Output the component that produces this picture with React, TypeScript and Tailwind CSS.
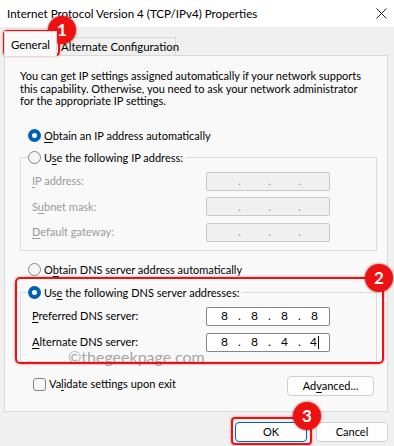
import type { ReactNode } from 'react';

const font = { fontFamily: 'Lato, "Noto Sans", sans-serif' };

function Radio({ checked = false }: { checked?: boolean }) {
  return checked ? (
    <span className="flex h-[13px] w-[13px] shrink-0 items-center justify-center rounded-full bg-[#005fb8]">
      <span className="h-[5px] w-[5px] rounded-full bg-white" />
    </span>
  ) : (
    <span className="h-[13px] w-[13px] shrink-0 rounded-full border border-[#858585] bg-[#f5f5f5]" />
  );
}

function Option({ checked, children }: { checked?: boolean; children: ReactNode }) {
  return (
    <div className="flex h-[16px] items-center gap-[3px] whitespace-nowrap bg-[#f9f9f9] pr-[3px]">
      <Radio checked={checked} />
      <span className="leading-[16px]">{children}</span>
    </div>
  );
}

function IpBox({ values, disabled }: { values: string[]; disabled?: boolean }) {
  return (
    <div
      className={
        disabled
          ? 'flex h-[19px] w-[124px] items-center rounded-[2px] border border-[#c9c9c9] bg-[#f0f0f0] pl-[4px] text-[#8a8a8a]'
          : 'flex h-[19px] w-[124px] items-center rounded-[2px] border border-[#868686] bg-white pl-[4px] text-[12px] text-black'
      }
    >
      {values.map((v, i) => (
        <div key={i} className="flex items-center">
          {i > 0 && <span className="w-[3px] text-center">.</span>}
          <span className="flex w-[27px] items-center justify-center">
            {v}
            {i === 3 && values[3] === '4' && <span className="ml-px h-[13px] w-px bg-black" />}
          </span>
        </div>
      ))}
    </div>
  );
}

function Field({ label, values, disabled }: { label: ReactNode; values: string[]; disabled?: boolean }) {
  return (
    <div className="flex h-[19px] items-center whitespace-nowrap">
      <span className={disabled ? 'w-[174px] text-[#9a9a9a]' : 'w-[174px]'}>{label}</span>
      <IpBox values={values} disabled={disabled} />
    </div>
  );
}

function Badge({ n, className }: { n: string; className: string }) {
  return (
    <div
      className={`absolute flex h-[28px] w-[28px] items-center justify-center rounded-full bg-[#ee1111] text-[17px] font-bold text-white shadow-[0_0_2px_1px_rgba(120,0,0,0.35)] ${className}`}
    >
      {n}
    </div>
  );
}

export default function App() {
  const empty = ['', '', '', ''];
  return (
    <div className="relative h-[446px] w-[394px] overflow-hidden bg-[#f0f0f0] text-[11px] text-black" style={font}>
      {/* title bar */}
      <div className="flex h-[27px] items-center justify-between bg-white pl-[7px] pr-[7px]">
        <span className="whitespace-nowrap text-[11.6px]">Internet Protocol Version 4 (TCP/IPv4) Properties</span>
        <svg width="11" height="11" viewBox="0 0 11 11" className="mb-[1px]">
          <path d="M0.5 0.5 L10.5 10.5 M10.5 0.5 L0.5 10.5" stroke="#222" strokeWidth="1" />
        </svg>
      </div>

      {/* tabs */}
      <div className="flex items-end whitespace-nowrap pl-[4px] pt-[4px]">
        <div className="relative z-10 -mb-px flex h-[25px] w-[53px] items-start justify-center border border-b-0 border-[#d9d9d9] bg-[#f9f9f9] pt-[4px] text-[11.4px]">
          General
        </div>
        <div className="flex h-[18px] w-[119px] items-center border border-b-0 border-l-0 border-[#d9d9d9] bg-[#f0f0f0] pl-[4px] text-[11.4px]">
          Alternate Configuration
        </div>
      </div>

      {/* tab pane */}
      <div className="ml-[4px] h-[357px] w-[384px] border border-[#d9d9d9] bg-[#f9f9f9] pl-[15px] pr-[10px] pt-[14px]">
        <p className="whitespace-nowrap leading-[12.6px]">
          You can get IP settings assigned automatically if your network supports
          <br />
          this capability. Otherwise, you need to ask your network administrator
          <br />
          for the appropriate IP settings.
        </p>

        <div className="mt-[20px] pl-[8px]">
          <Option checked>
            <u className="underline-offset-2">O</u>btain an IP address automatically
          </Option>
        </div>

        <fieldset className="mt-[6px] h-[101px] border border-[#dcdcdc] pl-[7px] pr-[10px]">
          <legend>
            <Option>
              U<u className="underline-offset-2">s</u>e the following IP address:
            </Option>
          </legend>
          <div className="mt-[6px] flex flex-col gap-[6.5px] pl-[4px]">
            <Field label={<><u className="underline-offset-2">I</u>P address:</>} values={empty} disabled />
            <Field label={<>S<u className="underline-offset-2">u</u>bnet mask:</>} values={empty} disabled />
            <Field label={<><u className="underline-offset-2">D</u>efault gateway:</>} values={empty} disabled />
          </div>
        </fieldset>

        <div className="mt-[11px] pl-[8px]">
          <Option>
            O<u className="underline-offset-2">b</u>tain DNS server address automatically
          </Option>
        </div>

        <fieldset className="mt-[7px] h-[77px] border border-[#dcdcdc] pl-[7px] pr-[10px]">
          <legend>
            <Option checked>
              Us<u className="underline-offset-2">e</u> the following DNS server addresses:
            </Option>
          </legend>
          <div className="mt-[6px] flex flex-col gap-[7px] pl-[4px]">
            <Field label={<><u className="underline-offset-2">P</u>referred DNS server:</>} values={['8', '8', '8', '8']} />
            <Field label={<><u className="underline-offset-2">A</u>lternate DNS server:</>} values={['8', '8', '4', '4']} />
          </div>
        </fieldset>

        <div className="mt-[14px] flex items-start justify-between whitespace-nowrap pr-[3px]">
          <div className="flex items-center gap-[3px] pl-[13px]">
            <span className="h-[13px] w-[13px] rounded-[3px] border border-[#858585] bg-[#f6f6f6]" />
            <span>
              Va<u className="underline-offset-2">l</u>idate settings upon exit
            </span>
          </div>
          <button className="h-[20px] w-[87px] rounded-[4px] border border-[#d0d0d0] bg-[#fdfdfd] text-center">
            Ad<u className="underline-offset-2">v</u>anced...
          </button>
        </div>
      </div>

      {/* dialog buttons */}
      <div className="flex justify-end gap-[9px] pr-[6px] pt-[10px]">
        <button className="h-[20px] w-[72px] rounded-[4px] border border-[#005fb8] bg-[#fdfdfd] shadow-[inset_0_0_0_1px_#ffffff]">
          OK
        </button>
        <button className="h-[20px] w-[72px] rounded-[4px] border border-[#d0d0d0] bg-[#fdfdfd]">Cancel</button>
      </div>

      {/* watermark */}
      <div className="absolute left-[68px] top-[348px] whitespace-nowrap text-[16px] leading-[18px] text-[#a6a6a6]">
        ©thegeekpage.com
      </div>

      {/* annotations */}
      <div className="absolute left-[3px] top-[30px] h-[26px] w-[57px] rounded-[4px] border-2 border-[#ee1111] shadow-[0_0_3px_rgba(200,0,0,0.4)]" />
      <div className="absolute left-[15px] top-[277px] h-[87px] w-[369px] rounded-[5px] border-2 border-[#ee1111] shadow-[0_0_3px_rgba(200,0,0,0.4)]" />
      <div className="absolute left-[231px] top-[417px] h-[28px] w-[81px] rounded-[4px] border-2 border-[#ee1111] shadow-[0_0_3px_rgba(200,0,0,0.4)]" />
      <Badge n="1" className="left-[48px] top-[16px]" />
      <Badge n="2" className="left-[365px] top-[264px]" />
      <Badge n="3" className="left-[293px] top-[402px]" />
    </div>
  );
}
